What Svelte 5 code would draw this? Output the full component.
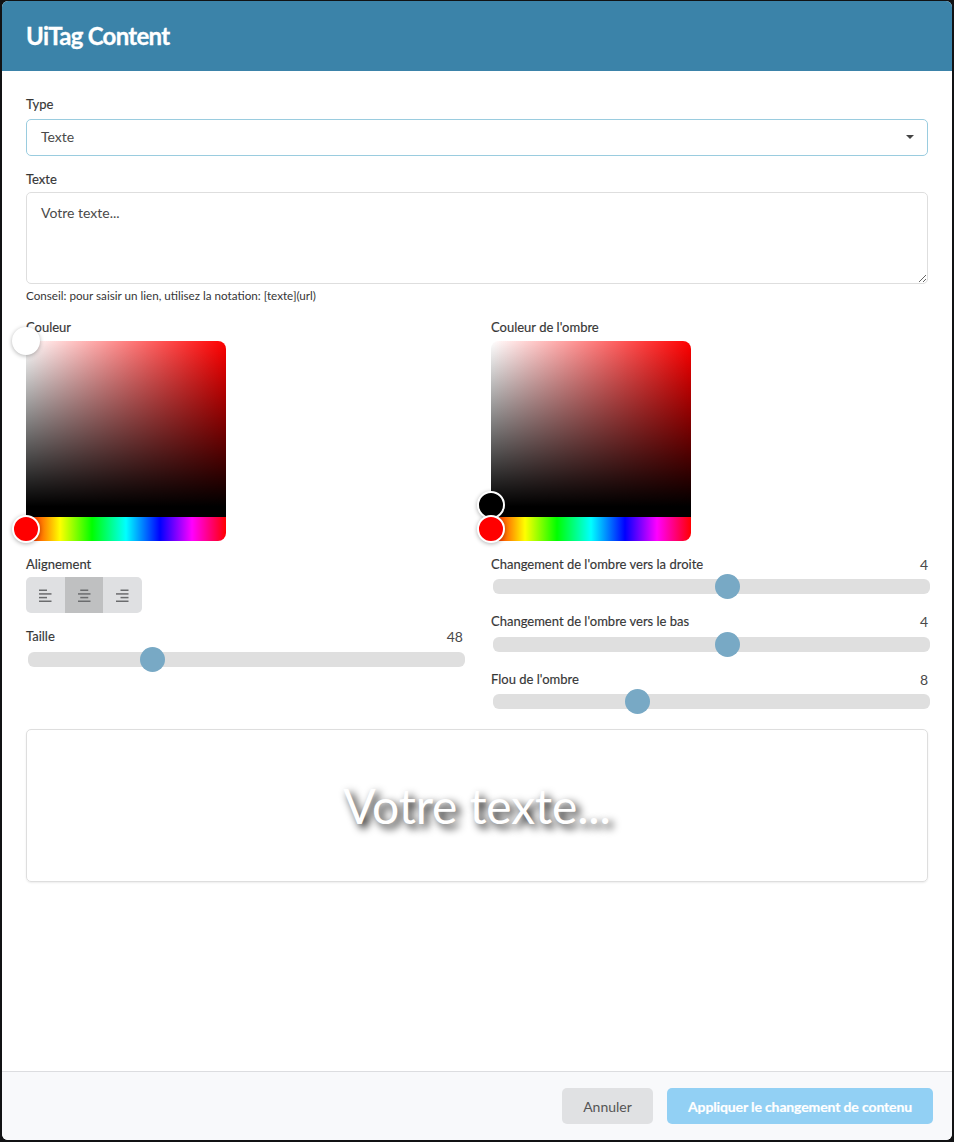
<script>
  const aligns = [
    { id: 'left', lines: [[0, 8], [0, 12.5], [0, 8], [0, 12.5]] },
    { id: 'center', lines: [[2.25, 8], [0, 12.5], [2.25, 8], [0, 12.5]] },
    { id: 'right', lines: [[4.5, 8], [0, 12.5], [4.5, 8], [0, 12.5]] }
  ];
  const shadowSliders = [
    { label: "Changement de l'ombre vers la droite", value: 4, pos: 234.5 },
    { label: "Changement de l'ombre vers le bas", value: 4, pos: 234.5 },
    { label: "Flou de l'ombre", value: 8, pos: 144.5 }
  ];
</script>

<div class="backdrop">
  <div class="modal">
    <header class="head"><h1>UiTag Content</h1></header>

    <main class="body">
      <div class="field">
        <span class="label">Type</span>
        <div class="select">
          <span>Texte</span>
          <svg width="8" height="4" viewBox="0 0 8 4"><path d="M0 0h8L4 4z" fill="#444" /></svg>
        </div>
      </div>

      <div class="field texte">
        <span class="label">Texte</span>
        <textarea class="area">Votre texte...</textarea>
        <small class="hint">Conseil: pour saisir un lien, utilisez la notation: [texte](url)</small>
      </div>

      <div class="columns pickers">
        <div>
          <span class="label">Couleur</span>
          <div class="picker">
            <div class="sat"></div>
            <div class="hue"></div>
            <span class="dot white" style="left: 0; top: 0"></span>
            <span class="dot red" style="left: 0; top: 188px"></span>
          </div>
        </div>
        <div>
          <span class="label">Couleur de l'ombre</span>
          <div class="picker">
            <div class="sat"></div>
            <div class="hue"></div>
            <span class="dot black" style="left: 0; top: 164px"></span>
            <span class="dot red" style="left: 0; top: 188px"></span>
          </div>
        </div>
      </div>

      <div class="columns controls">
        <div>
          <span class="label">Alignement</span>
          <div class="btn-group">
            {#each aligns as a}
              <button class:active={a.id === 'center'} aria-label={a.id}>
                <svg width="13" height="13" viewBox="0 0 13 13">
                  {#each a.lines as l, i}
                    <rect x={l[0]} y={i * 3.67 + 0.5} width={l[1]} height="1.5" fill="#6b6c6e" />
                  {/each}
                </svg>
              </button>
            {/each}
          </div>
          <div class="slider-row taille">
            <div class="slider-head"><span class="label">Taille</span><span class="val">48</span></div>
            <div class="track"><span class="thumb" style="left: 124px"></span></div>
          </div>
        </div>
        <div>
          {#each shadowSliders as s}
            <div class="slider-row shadow">
              <div class="slider-head"><span class="label">{s.label}</span><span class="val">{s.value}</span></div>
              <div class="track"><span class="thumb" style="left: {s.pos}px"></span></div>
            </div>
          {/each}
        </div>
      </div>

      <div class="preview"><span>Votre texte...</span></div>
    </main>

    <footer class="foot">
      <button class="btn cancel">Annuler</button>
      <button class="btn apply">Appliquer le changement de contenu</button>
    </footer>
  </div>
</div>

<style>
  :global(body) {
    background: #111214;
    font-family: Lato, "Open Sans", sans-serif;
  }
  .backdrop {
    height: 1142px;
    padding: 1px 2px 2px;
    box-sizing: border-box;
    overflow: hidden;
  }
  .modal {
    height: 100%;
    display: flex;
    flex-direction: column;
    background: #fff;
    border-radius: 6px;
    overflow: hidden;
    color: #363636;
  }
  .head {
    height: 70px;
    flex: none;
    display: flex;
    align-items: center;
    padding: 0 24px;
    background: #3b83a9;
  }
  h1 {
    margin: 0;
    font-size: 24px;
    line-height: 30px;
    font-weight: 700;
    letter-spacing: -0.72px;
    color: #fff;
    -webkit-text-stroke: 0.3px #fff;
  }
  .body {
    flex: 1;
    padding: 25px 24px 0;
  }
  .label {
    display: block;
    font-size: 13px;
    line-height: 16px;
    color: #363636;
    -webkit-text-stroke: 0.15px #363636;
  }
  .field .label { margin-bottom: 7px; }
  .select {
    height: 37px;
    box-sizing: border-box;
    display: flex;
    align-items: center;
    justify-content: space-between;
    padding: 0 13px 2px 14px;
    border: 1px solid #9accdf;
    border-radius: 5px;
    font-size: 14px;
    color: #4a4a4a;
  }
  .texte { margin-top: 15px; }
  .texte .label { margin-bottom: 5px; }
  .area {
    display: block;
    width: 100%;
    height: 92px;
    box-sizing: border-box;
    padding: 11px 14px;
    border: 1px solid #dedede;
    border-radius: 5px;
    font: 14px/18px Lato, sans-serif;
    color: #4a4a4a;
    outline: none;
  }
  .hint {
    display: block;
    margin-top: 4px;
    font-size: 11.66px;
    line-height: 15px;
    color: #363636;
  }
  .columns {
    display: grid;
    grid-template-columns: 437px 437px;
    column-gap: 28px;
  }
  .pickers { margin-top: 16px; }
  .picker {
    position: relative;
    width: 200px;
    height: 200px;
    margin-top: 6px;
  }
  .sat {
    height: 176px;
    border-radius: 8px 8px 0 0;
    background:
      linear-gradient(to top, #000 6%, rgba(0, 0, 0, 0.86) 20%, transparent 100%),
      linear-gradient(to right, #fff 0%, #f00 100%);
  }
  .hue {
    height: 24px;
    border-radius: 0 0 8px 8px;
    background: linear-gradient(to right, #f00 0%, #ff0 17%, #0f0 33%, #0ff 50%, #00f 67%, #f0f 83%, #f00 100%);
  }
  .dot {
    position: absolute;
    width: 28px;
    height: 28px;
    margin: -14px 0 0 -14px;
    box-sizing: border-box;
    border: 2px solid #fff;
    border-radius: 50%;
    box-shadow: 0 1px 4px rgba(0, 0, 0, 0.3);
  }
  .dot.white { background: #fff; }
  .dot.red { background: #f00; }
  .dot.black { background: #000; }
  .controls { margin-top: 15px; }
  .btn-group {
    display: flex;
    width: 116px;
    height: 36px;
    margin-top: 5px;
    border-radius: 5px;
    overflow: hidden;
  }
  .btn-group button {
    flex: 1;
    padding: 0;
    border: 0;
    background: #dfe0e2;
    display: flex;
    align-items: center;
    justify-content: center;
  }
  .btn-group button.active { background: #bfc0c1; }
  .slider-row.taille { margin-top: 15px; }
  .slider-row.shadow + .slider-row.shadow { margin-top: 19px; }
  .slider-row.shadow:nth-child(2) .track { margin-top: 8px; }
  .slider-head {
    display: flex;
    justify-content: space-between;
    align-items: center;
    height: 16px;
  }
  .val { font-size: 14px; color: #4a4a4a; }
  .track {
    position: relative;
    width: 437px;
    height: 15px;
    margin: 7px 0 0 2px;
    background: #dfdfdf;
    border-radius: 6px;
  }
  .taille .track { margin-top: 8px; }
  .thumb {
    position: absolute;
    top: 50%;
    width: 25px;
    height: 25px;
    margin: -12.5px 0 0 -12.5px;
    border-radius: 50%;
    background: #78a9c5;
  }
  .preview {
    height: 153px;
    box-sizing: border-box;
    margin-top: 20px;
    display: flex;
    align-items: center;
    justify-content: center;
    border: 1px solid #dedede;
    border-radius: 5px;
    box-shadow: 0 1px 2px rgba(0, 0, 0, 0.08);
    font-size: 48px;
    letter-spacing: -0.15px;
    color: #fff;
    text-shadow: 4px 4px 8px #000;
  }
  .foot {
    flex: none;
    height: 69px;
    box-sizing: border-box;
    display: flex;
    align-items: flex-start;
    justify-content: flex-end;
    gap: 14px;
    padding: 16px 19px 0 0;
    border-top: 1px solid #dcdde0;
    background: #f8f9fb;
  }
  .btn {
    height: 36px;
    border: 0;
    border-radius: 5px;
    font: 14px Lato, sans-serif;
  }
  .cancel {
    width: 91px;
    background: #e0e1e3;
    color: #555;
  }
  .apply {
    width: 266px;
    background: #92d0f4;
    color: #fff;
    font-weight: 700;
    letter-spacing: -0.13px;
    -webkit-text-stroke: 0.2px #fff;
  }
</style>
